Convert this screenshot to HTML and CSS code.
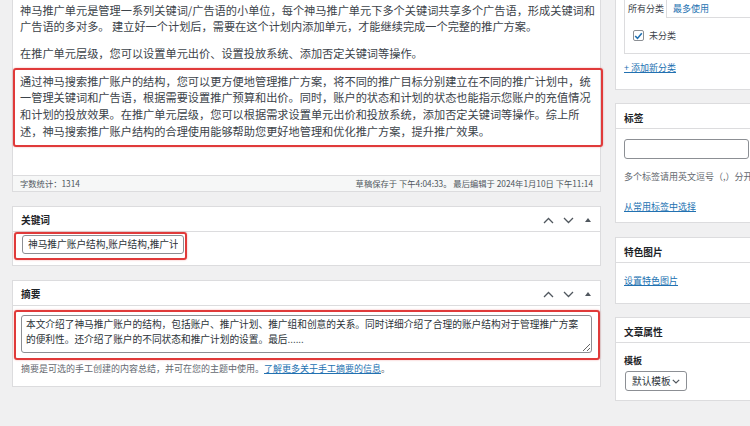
FILE: index.html
```html
<!DOCTYPE html>
<html lang="zh-CN">
<head>
<meta charset="utf-8">
<title>编辑文章</title>
<link rel="stylesheet" href="styles.css">
</head>
<body>
<div class="layout">
  <div class="main">
    <div class="editor">
      <div class="editor-content">
        <p>神马推广单元是管理一系列关键词/广告语的小单位，每个神马推广单元下多个关键词共享多个广告语，形成关键词和<br>广告语的多对多。 建立好一个计划后，需要在这个计划内添加单元，才能继续完成一个完整的推广方案。</p>
        <p>在推广单元层级，您可以设置单元出价、设置投放系统、添加否定关键词等操作。</p>
        <p class="mark-para">通过神马搜索推广账户的结构，您可以更方便地管理推广方案，将不同的推广目标分别建立在不同的推广计划中，统<br>一管理关键词和广告语，根据需要设置推广预算和出价。同时，账户的状态和计划的状态也能指示您账户的充值情况<br>和计划的投放效果。在推广单元层级，您可以根据需求设置单元出价和投放系统，添加否定关键词等操作。综上所<br>述，神马搜索推广账户结构的合理使用能够帮助您更好地管理和优化推广方案，提升推广效果。</p>
      </div>
      <div class="editor-status">
        <span>字数统计：1314</span>
        <span>草稿保存于 下午4:04:33。 最后编辑于 2024年1月10日 下午11:14</span>
      </div>
    </div>

    <div class="postbox">
      <div class="postbox-header">
        <h2>关键词</h2>
        <div class="handle-actions">
          <span class="handle"><svg width="11" height="7" viewBox="0 0 11 7"><polyline points="1,6 5.5,1.5 10,6" fill="none" stroke="#50575e" stroke-width="1.3"/></svg></span>
          <span class="handle"><svg width="11" height="7" viewBox="0 0 11 7"><polyline points="1,1 5.5,5.5 10,1" fill="none" stroke="#50575e" stroke-width="1.3"/></svg></span>
          <span class="handle"><svg width="6" height="4" viewBox="0 0 6 4"><polygon points="0,4 3,0 6,4" fill="#50575e"/></svg></span>
        </div>
      </div>
      <div class="kw-body">
        <div class="mark-box kw-mark">
          <input class="kw-input" type="text" value="神马推广账户结构,账户结构,推广计划">
        </div>
      </div>
    </div>

    <div class="postbox">
      <div class="postbox-header">
        <h2>摘要</h2>
        <div class="handle-actions">
          <span class="handle"><svg width="11" height="7" viewBox="0 0 11 7"><polyline points="1,6 5.5,1.5 10,6" fill="none" stroke="#50575e" stroke-width="1.3"/></svg></span>
          <span class="handle"><svg width="11" height="7" viewBox="0 0 11 7"><polyline points="1,1 5.5,5.5 10,1" fill="none" stroke="#50575e" stroke-width="1.3"/></svg></span>
          <span class="handle"><svg width="6" height="4" viewBox="0 0 6 4"><polygon points="0,4 3,0 6,4" fill="#50575e"/></svg></span>
        </div>
      </div>
      <div class="ex-body">
        <div class="mark-box ex-mark">
          <textarea class="excerpt" wrap="off">本文介绍了神马推广账户的结构，包括账户、推广计划、推广组和创意的关系。同时详细介绍了合理的账户结构对于管理推广方案
的便利性。还介绍了账户的不同状态和推广计划的设置。最后......</textarea>
        </div>
        <p class="help">摘要是可选的手工创建的内容总结，并可在您的主题中使用。<a href="#">了解更多关于手工摘要的信息</a>。</p>
      </div>
    </div>
  </div>

  <div class="side">
    <div class="side-box cat-box">
      <div class="cat-tabs">
        <span class="tab-active">所有分类</span>
        <span class="tab-rest"><a href="#">最多使用</a></span>
      </div>
      <div class="cat-panel">
        <span class="checkbox"><svg width="9" height="8" viewBox="0 0 9 8"><polyline points="1.2,4 3.5,6.4 7.8,1.2" fill="none" stroke="#2271b1" stroke-width="1.6"/></svg></span>
        <span class="cat-label">未分类</span>
      </div>
      <a class="add-cat" href="#">+ 添加新分类</a>
    </div>

    <div class="side-box tag-box">
      <div class="side-header"><h2>标签</h2></div>
      <div class="tag-body">
        <input class="tag-input" type="text">
        <p class="side-help">多个标签请用英文逗号（,）分开</p>
        <a class="side-link tag-link" href="#">从常用标签中选择</a>
      </div>
    </div>

    <div class="side-box thumb-box">
      <div class="side-header"><h2>特色图片</h2></div>
      <div class="thumb-body">
        <a class="side-link" href="#">设置特色图片</a>
      </div>
    </div>

    <div class="side-box attr-box">
      <div class="side-header"><h2>文章属性</h2></div>
      <div class="attr-body">
        <p class="attr-label">模板</p>
        <div class="select-like">
          <span>默认模板</span>
          <svg width="8" height="5" viewBox="0 0 8 5"><polyline points="0.8,0.8 4,4 7.2,0.8" fill="none" stroke="#50575e" stroke-width="1.2"/></svg>
        </div>
      </div>
    </div>
  </div>
</div>
</body>
</html>
```

FILE: styles.css
```css
* { box-sizing: border-box; }

html, body {
  margin: 0;
  padding: 0;
}

body {
  width: 750px;
  height: 426px;
  overflow: hidden;
  background: #f0f0f1;
  font-family: "Noto Sans CJK SC", "Noto Sans", sans-serif;
  color: #3c434a;
  font-size: 9px;
}

a { color: #2271b1; text-decoration: underline; }

.layout {
  display: flex;
  align-items: flex-start;
  gap: 14px;
  padding-left: 12px;
}

.main {
  width: 589px;
  flex: none;
}

.side {
  width: 193px;
  flex: none;
}

/* editor */
.editor {
  background: #fff;
  border: 1px solid #dcdcde;
  border-top: 0;
}

.editor-content {
  padding: 1.65px 8px 28px 7px;
  font-size: 11.2px;
  line-height: 16.7px;
  color: #3c434a;
}

.editor-content p {
  margin: 0;
  white-space: nowrap;
}

.editor-content p + p {
  margin-top: 9.6px;
}

.editor-content p.mark-para {
  margin: 6.65px -11px 0 -7px;
  padding: 2.65px 0 5.55px 5px;
  border: 2px solid #e03a3a;
  border-radius: 3px;
  box-shadow: 0 0 2px rgba(224, 58, 58, 0.45);
}

.editor-status {
  display: flex;
  justify-content: space-between;
  height: 16px;
  border-top: 1px solid #dcdcde;
  background: #f6f7f7;
  padding: 0 7px;
  font-size: 8.3px;
  line-height: 15px;
  color: #50575e;
}

/* postboxes */
.postbox {
  background: #fff;
  border: 1px solid #dcdcde;
  margin-top: 14px;
}

.postbox-header {
  display: flex;
  align-items: center;
  justify-content: space-between;
  height: 25px;
  border-bottom: 1px solid #dcdcde;
  padding: 3px 2px 0 8px;
}

.postbox-header h2,
.side-header h2 {
  margin: 0;
  font-size: 9.7px;
  font-weight: 600;
  color: #1d2327;
}

.handle-actions {
  display: flex;
  align-items: center;
}

.handle {
  width: 20px;
  height: 20px;
  display: flex;
  align-items: center;
  justify-content: center;
}

.mark-box {
  border: 2px solid #e03a3a;
  border-radius: 3px;
  box-shadow: 0 0 2px rgba(224, 58, 58, 0.45);
}

.kw-body {
  padding: 0 0 5px 1px;
}

.kw-mark {
  display: flex;
  width: fit-content;
  padding: 1px 1px 4px 6px;
}

.kw-input {
  display: block;
  width: 162px;
  height: 19px;
  margin: 0;
  border: 1px solid #8c8f94;
  border-radius: 3px;
  padding: 0 5px;
  font-family: "Noto Sans CJK SC", "Noto Sans", sans-serif;
  font-size: 9.7px;
  color: #2c3338;
  background: #fff;
}

.ex-body {
  padding: 4px 0 10.5px 1px;
}

.ex-mark {
  padding: 3px 6px 5px 5px;
}

.excerpt {
  display: block;
  width: 100%;
  height: 38px;
  margin: 0;
  border: 1px solid #8c8f94;
  border-radius: 3px;
  padding: 1px 4px;
  font-family: "Noto Sans CJK SC", "Noto Sans", sans-serif;
  font-size: 9.7px;
  line-height: 15.5px;
  color: #2c3338;
  overflow: hidden;
  resize: vertical;
  white-space: pre;
}

.help {
  margin: 2.5px 0 0 7px;
  font-size: 9px;
  line-height: 13px;
  color: #646970;
}

/* sidebar */
.side-box {
  background: #fff;
  border: 1px solid #dcdcde;
  margin-top: 13px;
}

.thumb-box {
  margin-top: 14px;
}

.cat-box {
  margin-top: 0;
  border-top: 0;
  padding: 0 0 15.5px 8px;
}

.cat-tabs {
  display: flex;
  height: 18px;
  font-size: 9px;
  line-height: 17px;
}

.tab-active {
  border-left: 1px solid #dcdcde;
  border-right: 1px solid #dcdcde;
  padding: 0 2px 0 3px;
  color: #3c434a;
}

.tab-rest {
  flex: 1;
  border-bottom: 1px solid #dcdcde;
  padding-left: 6px;
}

.tab-rest a { text-decoration: none; }

.cat-panel {
  display: flex;
  align-items: center;
  height: 36px;
  border: 1px solid #dcdcde;
  border-top: 0;
  padding-left: 8px;
}

.checkbox {
  width: 11px;
  height: 11px;
  border: 1px solid #8c8f94;
  border-radius: 2px;
  display: flex;
  align-items: center;
  justify-content: center;
}

.cat-label {
  margin-left: 5px;
  font-size: 9px;
  color: #3c434a;
}

.add-cat {
  display: block;
  margin-top: 6.5px;
  font-size: 9px;
  line-height: 13px;
}

.side-header {
  height: 25px;
  display: flex;
  align-items: center;
  border-bottom: 1px solid #dcdcde;
  padding: 3px 0 0 8px;
}

.tag-body {
  padding: 10px 0 9.5px 8px;
}

.tag-input {
  display: block;
  width: 125px;
  height: 20px;
  margin: 0;
  border: 1px solid #8c8f94;
  border-radius: 3px;
  background: #fff;
}

.side-help {
  margin: 10.5px 0 0;
  font-size: 9px;
  line-height: 13px;
  color: #646970;
  white-space: nowrap;
}

.side-link {
  display: block;
  font-size: 9px;
  line-height: 13px;
}

.tag-link {
  margin-top: 17px;
}

.thumb-body {
  padding: 10.5px 0 16.5px 8px;
}

.attr-body {
  padding: 10.5px 0 9px 8px;
}

.attr-label {
  margin: 0;
  font-size: 9px;
  line-height: 13px;
  font-weight: 600;
  color: #1d2327;
}

.select-like {
  display: flex;
  align-items: center;
  justify-content: space-between;
  width: 62px;
  height: 20px;
  margin: 4.5px 0 0 1px;
  padding: 0 6px 0 6px;
  border: 1px solid #8c8f94;
  border-radius: 3px;
  font-size: 9.7px;
  color: #2c3338;
}
```
